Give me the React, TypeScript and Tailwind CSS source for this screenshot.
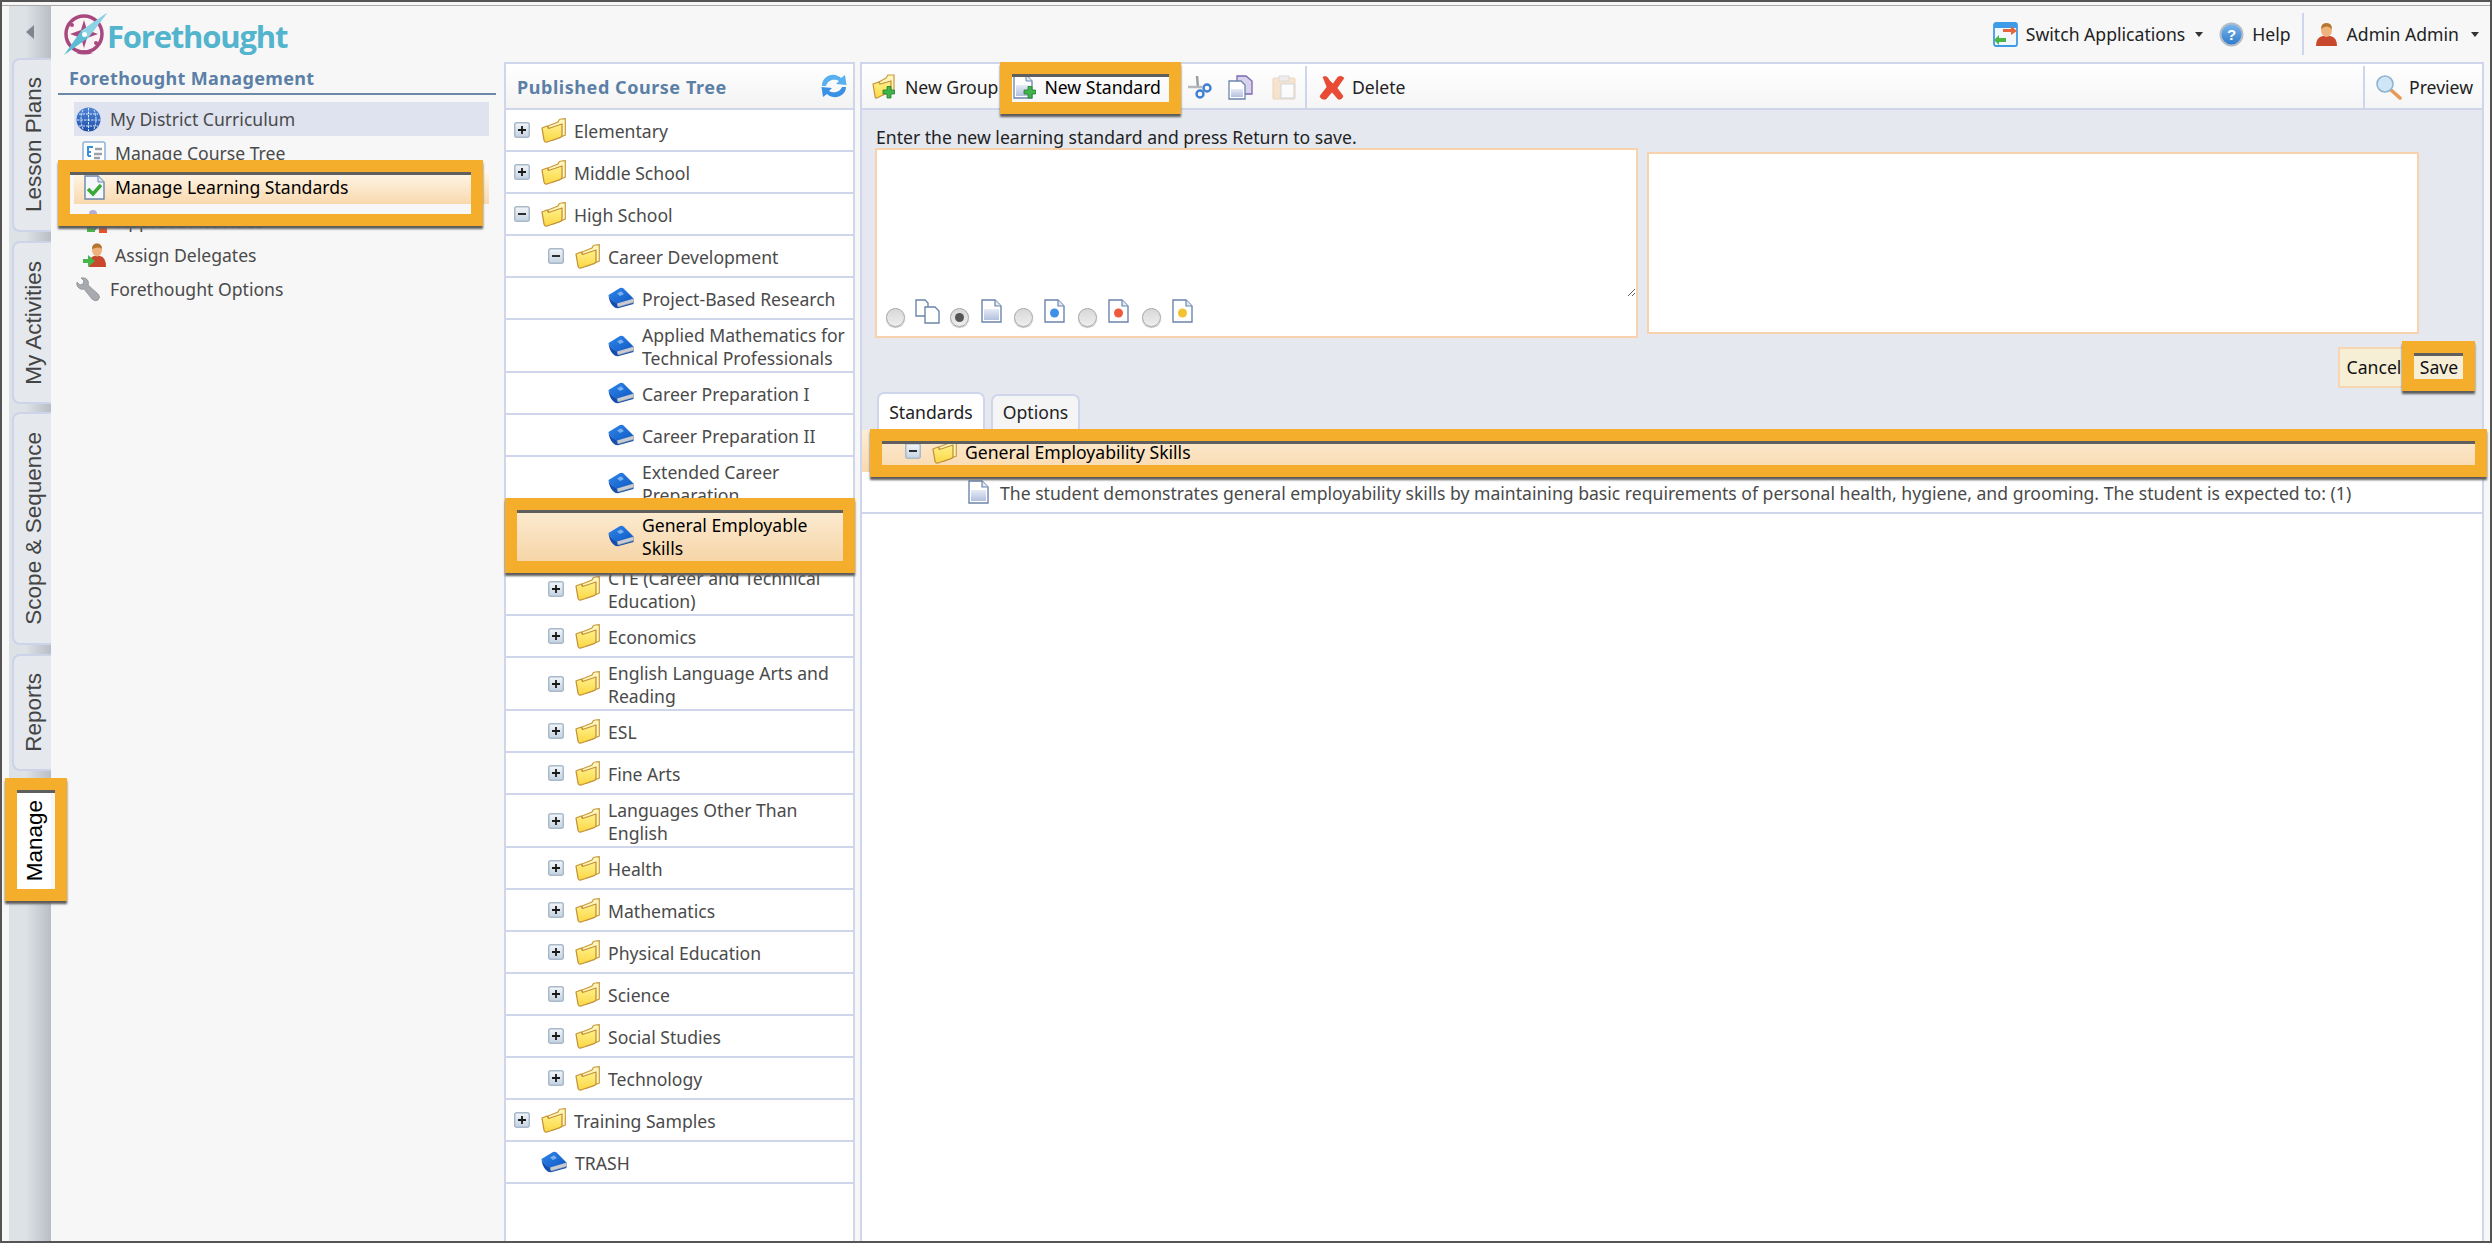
import type { ReactNode } from "react";

const Folder = () => (
  <svg width="25" height="25" viewBox="0 0 25 25" className="shrink-0">
    <path d="M7 8 L17 4 Q18 1 20 1 L24.3 0.7 V17 L12 22 Z" fill="#fff6bd" stroke="#c99b3e" strokeWidth="1.2" />
    <path d="M1 10 L6 8 L7.5 10.5 L21 6 V17 Q21 19 19 19.6 L6 24 Q3.5 24.6 3 22 Z" fill="url(#folderFill)" stroke="#c4923a" strokeWidth="1.3" strokeLinejoin="round" />
  </svg>
);

const Book = () => (
  <svg width="26" height="22" viewBox="0 0 26 22" className="shrink-0">
    <path d="M0.5 8 Q1 15 5 19 Q7 21.5 10 21.3 L25.5 17 V15 L10 19.5 L9 16 Q3 14 0.5 8 Z" fill="#144fb0" />
    <path d="M9 16 L25.5 11.5 V15.5 L10 20 Z" fill="#c8ccd2" stroke="#8793a0" strokeWidth="0.6" />
    <path d="M0.5 8 L12 1 Q14 0.3 15.5 1.5 L25.5 11.5 L9 16.5 Q3 14.5 0.5 8 Z" fill="url(#bookFill)" />
    <path d="M9 6.5 L13 4.3 L16 7 L12 9 Z" fill="#78b0f0" />
  </svg>
);

const ToggleBox = ({ open }: { open?: boolean }) => (
  <svg width="16" height="16" viewBox="0 0 16 16" className="shrink-0">
    <rect x="0.75" y="0.75" width="14.5" height="14.5" rx="2" fill="url(#boxFill)" stroke="#a9b9c9" strokeWidth="1.5" />
    <path d={open ? "M4 8 H12" : "M4 8 H12 M8 4 V12"} stroke="#1a1a1a" strokeWidth="1.8" />
  </svg>
);

const Page = ({ dot }: { dot?: string }) => (
  <svg width="21" height="24" viewBox="0 0 21 24" className="shrink-0">
    <path d="M1 1 H14 L20 7 V23 H1 Z" fill="#ffffff" stroke="#6b85ad" strokeWidth="1.4" />
    <path d="M14 1 V7 H20" fill="#e3e9f3" stroke="#6b85ad" strokeWidth="1.2" />
    {dot ? <circle cx="10.5" cy="14" r="4.5" fill={dot} /> : <rect x="3" y="10" width="15" height="11" fill="url(#pageFill)" />}
  </svg>
);

const DoublePage = () => (
  <svg width="25" height="25" viewBox="0 0 25 25" className="shrink-0">
    <path d="M1 1 H10 L13 4 V17 H1 Z" fill="#fff" stroke="#6b85ad" strokeWidth="1.4" />
    <path d="M10 8 H20 L24 12 V24 H10 Z" fill="#fff" stroke="#6b85ad" strokeWidth="1.4" />
  </svg>
);

const GreenPlus = () => (
  <path d="M11 16 H15 V12.5 H19 V16 H22.5 V20 H19 V24 H15 V20 H11 Z" fill="#3fb44a" stroke="#1f7d2b" strokeWidth="0.8" />
);

const NewFolderIcon = () => (
  <svg width="24" height="26" viewBox="0 0 24 26" className="shrink-0">
    <path d="M7 8 L14 4 L16 1 L22 1 V17 L10 21 Z" fill="#fff6bd" stroke="#c99b3e" strokeWidth="1.2" />
    <path d="M1 10 L7 8 L8 10 L19 7 V17 L5 24 Q3 24.5 3 22 Z" fill="url(#folderFill)" stroke="#c4923a" strokeWidth="1.2" />
    <GreenPlus />
  </svg>
);

const NewDocIcon = () => (
  <svg width="23" height="26" viewBox="0 0 23 26" className="shrink-0">
    <path d="M1 1 H13 L19 7 V24 H1 Z" fill="#fff" stroke="#6b85ad" strokeWidth="1.3" />
    <path d="M13 1 V7 H19" fill="#e3e9f3" stroke="#6b85ad" />
    <rect x="3" y="11" width="14" height="11" fill="url(#pageFill)" />
    <GreenPlus />
  </svg>
);

const Scissors = () => (
  <svg width="25" height="24" viewBox="0 0 25 24" className="shrink-0">
    <path d="M10 1 L11 13" stroke="#9aa0a6" strokeWidth="2.5" />
    <path d="M1 12 H15" stroke="#b5b9bd" strokeWidth="2.5" />
    <circle cx="13" cy="19" r="3.5" fill="none" stroke="#3f7fd0" strokeWidth="2.4" />
    <circle cx="20" cy="13" r="3.5" fill="none" stroke="#3f7fd0" strokeWidth="2.4" />
  </svg>
);

const CopyIcon = () => (
  <svg width="25" height="25" viewBox="0 0 25 25" className="shrink-0">
    <path d="M9 1 H18 L24 6 V19 H9 Z" fill="#d9d2ec" stroke="#7a68ad" strokeWidth="1.3" />
    <path d="M1 6 H13 L17 10 V24 H1 Z" fill="#fff" stroke="#6b85ad" strokeWidth="1.3" />
    <rect x="3" y="14" width="12" height="8" fill="url(#pageFill)" />
  </svg>
);

const PasteIcon = () => (
  <svg width="24" height="25" viewBox="0 0 24 25" className="shrink-0 opacity-40">
    <rect x="1" y="3" width="22" height="21" rx="1" fill="#f3c38c" stroke="#d9a064" />
    <rect x="7" y="1" width="10" height="5" fill="#d8d8d8" stroke="#aaa" />
    <rect x="9" y="9" width="13" height="14" fill="#fff" stroke="#8ea3c2" />
  </svg>
);

const DeleteIcon = () => (
  <svg width="26" height="25" viewBox="0 0 26 25" className="shrink-0">
    <path d="M4 2 Q8 0 10 5 L14 9 L19 2 Q22 0 25 3 L18 13 L24 21 Q23 25 19 24 L13 17 L7 24 Q2 25 1 21 L8 12 Z" fill="#ea4b34" stroke="#d93a26" strokeWidth="0.6" strokeLinejoin="round" />
  </svg>
);

const Magnifier = () => (
  <svg width="27" height="25" viewBox="0 0 27 25" className="shrink-0">
    <path d="M16 15 L25 23" stroke="#e69a5c" strokeWidth="3.6" strokeLinecap="round" />
    <circle cx="10" cy="9" r="8" fill="#cfe6f7" stroke="#8fb4d2" strokeWidth="1.6" />
  </svg>
);

const SwitchIcon = () => (
  <svg width="25" height="25" viewBox="0 0 25 25" className="shrink-0">
    <rect x="1" y="1" width="23" height="23" rx="2" fill="#f2f7fd" stroke="#3d9be8" strokeWidth="1.8" />
    <rect x="1" y="1" width="23" height="5" fill="#3d9be8" />
    <path d="M10 7 H18 V4 L24 9 L18 13 V10 H10 Z" fill="#e8643a" />
    <path d="M13 16 H6 V13 L1 18 L6 23 V20 H13 Z" fill="#4cb548" />
  </svg>
);

const HelpIcon = () => (
  <svg width="25" height="25" viewBox="0 0 25 25" className="shrink-0">
    <circle cx="12.5" cy="12.5" r="11" fill="url(#helpFill)" stroke="#b3bdc7" strokeWidth="2" />
    <text x="12.5" y="18" textAnchor="middle" fontSize="15" fontWeight="700" fill="#fff" fontFamily="'Liberation Sans', sans-serif">?</text>
  </svg>
);

const UserIcon = () => (
  <svg width="23" height="25" viewBox="0 0 23 25" className="shrink-0">
    <path d="M1 24 Q1 15 8 14 H15 Q22 15 22 24 Z" fill="#c9472c" />
    <ellipse cx="11.5" cy="8" rx="5.5" ry="7" fill="#efb27c" />
    <path d="M6 7 Q6 1 11.5 1 Q17 1 17 7 Q14 4 11 4.5 Q8 5 6 7 Z" fill="#b5772f" />
  </svg>
);

const RefreshIcon = () => (
  <svg width="26" height="26" viewBox="0 0 26 26">
    <path d="M1 13 C1 5 8 1 14 2 C16.5 2.5 18.5 3.5 20 5 L24 2 L25.5 12 L15 11 L18 8 C14 5.5 7 6.5 5 13 Z" fill="#58b0f0" />
    <path d="M25 14 C25 21 18 25 12 24 C9.5 23.5 7.5 22.5 6 21 L2 24 L0.5 14 L11 15 L8 18 C12 20.5 19 19.5 21 14 Z" fill="#3a90e4" />
  </svg>
);

const GlobeIcon = () => (
  <svg width="25" height="25" viewBox="0 0 25 25">
    <circle cx="12.5" cy="12.5" r="12" fill="url(#globeFill)" />
    <path d="M3 7 H22 M1 13 H24 M3 19 H22 M12.5 1 V24 M7 3 Q3 12 7 22 M18 3 Q22 12 18 22" stroke="#dbe8fa" strokeWidth="1" fill="none" strokeDasharray="2.5 1" />
  </svg>
);

const TreeIcon = () => (
  <svg width="24" height="24" viewBox="0 0 24 24">
    <rect x="1" y="1" width="22" height="22" rx="2" fill="#fff" stroke="#8fb1d8" strokeWidth="1.5" />
    <path d="M5 6 H11 M6 6 V15 M6 11 H9 M6 15 H9" stroke="#3a8fdc" strokeWidth="2" fill="none" />
    <path d="M13 8 H20 M12 13 H20 M12 17 H18" stroke="#9aa0a8" strokeWidth="2.4" />
  </svg>
);

const CheckDocIcon = () => (
  <svg width="21" height="25" viewBox="0 0 21 25">
    <path d="M1 1 H14 L20 7 V24 H1 Z" fill="#f4f7fb" stroke="#6b85ad" strokeWidth="1.4" />
    <path d="M14 1 V7 H20" fill="#dde5f0" stroke="#6b85ad" />
    <path d="M4 14 L9 19 L17 10" fill="none" stroke="#3aa935" strokeWidth="3.4" />
  </svg>
);

const ApproveIcon = () => (
  <svg width="24" height="26" viewBox="0 0 24 26">
    <circle cx="9" cy="6" r="4" fill="#b5acd8" />
    <circle cx="8" cy="17" r="6" fill="#7c74b0" />
    <rect x="15" y="16" width="8" height="9" fill="#e4552f" />
    <rect x="3" y="20" width="8" height="4" fill="#4cb548" />
  </svg>
);

const DelegateIcon = () => (
  <svg width="25" height="25" viewBox="0 0 25 25">
    <path d="M7 24 Q7 14 12 13 H18 Q24 14 24 24 Z" fill="#c9472c" />
    <ellipse cx="15" cy="7" rx="5" ry="6.5" fill="#efb27c" />
    <path d="M10 6 Q10 0.5 15 0.5 Q20 0.5 20 6 Q17 3 10 6 Z" fill="#b5772f" />
    <path d="M1 16 H6 V12 L13 18 L6 24 V20 H1 Z" fill="#46b54a" />
  </svg>
);

const WrenchIcon = () => (
  <svg width="25" height="25" viewBox="0 0 25 25">
    <path d="M1 5 L4 8 L7 7 L8 4 L5 1 Q10 0 12 4 Q13 6 12 8 L22 17 Q25 20 22 23 Q19 25 16 22 L8 12 Q5 13 3 11 Q0 9 1 5 Z" fill="#a7abaf" stroke="#8b8f93" strokeWidth="0.8" />
  </svg>
);

const Compass = () => (
  <svg width="46" height="44" viewBox="0 0 46 44" className="shrink-0">
    <circle cx="22" cy="22" r="18" fill="#fbf4f7" stroke="#a8487f" strokeWidth="3.5" />
    <path d="M22 8 L25 18 L36 22 L25 26 L22 36 L19 26 L8 22 L19 18 Z" fill="#a8487f" />
    <circle cx="10" cy="13" r="2" fill="#a8487f" />
    <circle cx="34" cy="31" r="2" fill="#a8487f" />
    <path d="M45 1 L26 26 L2 43 L19 19 Z" fill="#5bbcd4" />
    <path d="M45 1 L19 19 L26 26 Z" fill="#8ed3e4" />
    <circle cx="22.5" cy="22.5" r="2.5" fill="#fff" />
    <path d="M14 41 Q22 44 31 41 L22 38 Z" fill="#a8487f" />
  </svg>
);

// the orange callout frames laid over the screenshot
const Callout = ({ className }: { className: string }) => (
  <div className={`absolute z-10 pointer-events-none border-[12px] border-[#f5ae2c] shadow-[0_3px_2px_#5c5c5c,inset_0_3px_0_#5f5f5f] ${className}`} />
);

type TreeRow = {
  label: string;
  level: 0 | 1 | 2;
  kind: "open" | "closed" | "leaf";
  tall?: boolean;
  active?: boolean;
};

const treeRows: TreeRow[] = [
  { label: "Elementary", level: 0, kind: "closed" },
  { label: "Middle School", level: 0, kind: "closed" },
  { label: "High School", level: 0, kind: "open" },
  { label: "Career Development", level: 1, kind: "open" },
  { label: "Project-Based Research", level: 2, kind: "leaf" },
  { label: "Applied Mathematics for\nTechnical Professionals", level: 2, kind: "leaf", tall: true },
  { label: "Career Preparation I", level: 2, kind: "leaf" },
  { label: "Career Preparation II", level: 2, kind: "leaf" },
  { label: "Extended Career\nPreparation", level: 2, kind: "leaf", tall: true },
  { label: "General Employable\nSkills", level: 2, kind: "leaf", tall: true, active: true },
  { label: "CTE (Career and Technical\nEducation)", level: 1, kind: "closed", tall: true },
  { label: "Economics", level: 1, kind: "closed" },
  { label: "English Language Arts and\nReading", level: 1, kind: "closed", tall: true },
  { label: "ESL", level: 1, kind: "closed" },
  { label: "Fine Arts", level: 1, kind: "closed" },
  { label: "Languages Other Than\nEnglish", level: 1, kind: "closed", tall: true },
  { label: "Health", level: 1, kind: "closed" },
  { label: "Mathematics", level: 1, kind: "closed" },
  { label: "Physical Education", level: 1, kind: "closed" },
  { label: "Science", level: 1, kind: "closed" },
  { label: "Social Studies", level: 1, kind: "closed" },
  { label: "Technology", level: 1, kind: "closed" },
  { label: "Training Samples", level: 0, kind: "closed" },
  { label: "TRASH", level: 0, kind: "leaf" },
];

function TreeItem({ row }: { row: TreeRow }) {
  let indent = "pl-[8px]";
  if (row.level === 1) indent = "pl-[42px]";
  if (row.level === 2) indent = "pl-[102px]";
  if (row.level === 0 && row.kind === "leaf") indent = "pl-[35px]";

  return (
    <div
      className={`relative flex items-center border-b-2 border-[#cfd5ea] ${indent} ${row.tall ? "h-[53px]" : "h-[42px]"} ${
        row.active ? "bg-gradient-to-b from-[#fcecd2] to-[#f6d5a8] text-black" : "text-[#4a4a4a]"
      }`}
    >
      {row.kind !== "leaf" && (
        <>
          <ToggleBox open={row.kind === "open"} />
          <span className="w-[11px] shrink-0" />
          <Folder />
        </>
      )}
      {row.kind === "leaf" && <Book />}
      <span className="ml-[8px] mt-[2px] leading-[23px] whitespace-pre-line">{row.label}</span>
      {row.active && <Callout className="-left-[1px] -right-[2px] -top-[12px] -bottom-[12px]" />}
    </div>
  );
}

const NavRow = ({ icon, label, className }: { icon: ReactNode; label: string; className?: string }) => (
  <div className={`relative flex items-center h-[34px] ${className ?? ""}`}>
    {icon}
    <span className="mt-[1px]">{label}</span>
  </div>
);

const Tab = ({ label, className }: { label: string; className: string }) => (
  <div className={`ml-[3px] flex items-center justify-center rounded-l-[8px] border-2 border-r-0 border-[#cdd3e8] bg-[#e5e9ee] pl-[3px] ${className}`}>
    <span className="[writing-mode:vertical-rl] rotate-180 font-['Liberation_Sans',sans-serif] text-[22.5px] text-[#444]">{label}</span>
  </div>
);

const Radio = ({ on }: { on?: boolean }) => (
  <span className="mt-[9px] flex h-[19px] w-[19px] shrink-0 items-center justify-center rounded-full border border-[#a8a8a8] bg-gradient-to-b from-[#d8d8d8] to-[#eeeeee] shadow-[0_1px_1px_#bbb]">
    {on && <span className="h-[9px] w-[9px] rounded-full bg-[#555]" />}
  </span>
);

const Caret = ({ className }: { className: string }) => (
  <span className={`h-0 w-0 border-x-[4px] border-t-[5px] border-x-transparent border-t-[#333] ${className}`} />
);

export default function App() {
  return (
    <div className="flex h-[1243px] w-[2492px] flex-col overflow-hidden border-2 border-[#555] bg-[#f7f7f7] font-['Noto_Sans',sans-serif] text-[17.6px]">
      <svg className="absolute h-0 w-0">
        <defs>
          <linearGradient id="folderFill" x1="0" y1="0" x2="0" y2="1">
            <stop offset="0" stopColor="#fff08a" />
            <stop offset="1" stopColor="#fbd844" />
          </linearGradient>
          <linearGradient id="bookFill" x1="0" y1="0" x2="1" y2="1">
            <stop offset="0" stopColor="#2f86ea" />
            <stop offset="1" stopColor="#1058c4" />
          </linearGradient>
          <linearGradient id="boxFill" x1="0" y1="0" x2="0" y2="1">
            <stop offset="0" stopColor="#f2f6fa" />
            <stop offset="1" stopColor="#c4d2e0" />
          </linearGradient>
          <linearGradient id="pageFill" x1="0" y1="0" x2="0" y2="1">
            <stop offset="0" stopColor="#e6ebf5" />
            <stop offset="1" stopColor="#b3c0de" />
          </linearGradient>
          <linearGradient id="helpFill" x1="0" y1="0" x2="0" y2="1">
            <stop offset="0" stopColor="#7db8ee" />
            <stop offset="1" stopColor="#2c78c8" />
          </linearGradient>
          <linearGradient id="globeFill" x1="0" y1="0" x2="0" y2="1">
            <stop offset="0" stopColor="#4f86d8" />
            <stop offset="1" stopColor="#1f4fa8" />
          </linearGradient>
        </defs>
      </svg>

      <div className="h-[3px] shrink-0 border-b border-[#aaa] box-content" />

      <div className="flex min-h-0 flex-1 pl-[7px] pr-[6px]">
        {/* side tabs */}
        <div className="flex w-[42px] shrink-0 flex-col bg-gradient-to-r from-[#dde2e6] from-40% to-[#b9bdc6]">
          <div className="flex h-[52px] shrink-0 items-center justify-center">
            <span className="h-0 w-0 border-y-[7px] border-r-[8px] border-y-transparent border-r-[#7d8790]" />
          </div>
          <Tab label="Lesson Plans" className="h-[174px]" />
          <Tab label="My Activities" className="mt-[9px] h-[163px]" />
          <Tab label="Scope & Sequence" className="mt-[8px] h-[233px]" />
          <Tab label="Reports" className="mt-[9px] h-[117px]" />
          <div className="relative ml-[3px] mt-[10px] flex h-[119px] items-center justify-center bg-white pl-[6px]">
            <span className="[writing-mode:vertical-rl] rotate-180 font-['Liberation_Sans',sans-serif] text-[22.5px] text-black">Manage</span>
            <Callout className="-left-[7px] top-[-3px] h-[123px] w-[62px]" />
          </div>
        </div>

        <div className="flex min-w-0 flex-1 flex-col">
          {/* top bar */}
          <div className="flex h-[56px] shrink-0 items-center justify-between pl-[11px] pr-[5px] text-[#222]">
            <div className="flex items-center">
              <Compass />
              <span className="ml-[-1px] mt-[4px] font-['Open_Sans',sans-serif] text-[31px] font-bold leading-none tracking-[-1.2px] text-[#52b4cd]">Forethought</span>
            </div>
            <div className="flex items-center">
              <SwitchIcon />
              <span className="ml-[8px]">Switch Applications</span>
              <Caret className="ml-[10px]" />
              <span className="ml-[16px] flex"><HelpIcon /></span>
              <span className="ml-[8px]">Help</span>
              <span className="ml-[11px] h-[42px] w-[2px] bg-[#cfd5ea]" />
              <span className="ml-[11px] flex"><UserIcon /></span>
              <span className="ml-[9px]">Admin Admin</span>
              <Caret className="ml-[12px]" />
            </div>
          </div>

          <div className="flex min-h-0 flex-1">
            {/* management nav */}
            <div className="w-[453px] shrink-0 pl-[7px] pr-[8px] text-[#4a4a4a]">
              <div className="flex h-[33px] items-end border-b-2 border-[#6c8aa8] pb-[1px] pl-[11px] text-[18px] font-bold tracking-[0.35px] text-[#5b7fa6]">Forethought Management</div>
              <div className="ml-[16px] mr-[7px] mt-[7px]">
                <NavRow className="bg-[#dfe3ef] pl-[2px] gap-[9px]" icon={<GlobeIcon />} label="My District Curriculum" />
                <NavRow className="pl-[8px] gap-[9px]" icon={<TreeIcon />} label="Manage Course Tree" />
                <NavRow
                  className="bg-gradient-to-b from-[#fff8ec] to-[#f9d9ae] pl-[10px] gap-[10px] text-black"
                  icon={<CheckDocIcon />}
                  label="Manage Learning Standards"
                />
                <div className="relative h-0">
                  <Callout className="left-[-16px] top-[-44px] h-[66px] w-[425px]" />
                </div>
                <NavRow className="pl-[10px] gap-[9px]" icon={<ApproveIcon />} label="Approve Activities" />
                <NavRow className="pl-[8px] gap-[8px]" icon={<DelegateIcon />} label="Assign Delegates" />
                <NavRow className="pl-[2px] gap-[9px]" icon={<WrenchIcon />} label="Forethought Options" />
              </div>
            </div>

            {/* course tree */}
            <div className="w-[351px] shrink-0 border-x-2 border-t-2 border-[#cfd5ea] bg-white">
              <div className="flex h-[46px] items-center justify-between border-b-2 border-[#cfd5ea] bg-gradient-to-b from-white to-[#f3f3f3] pl-[11px] pr-[6px]">
                <span className="mt-[2px] text-[18px] font-bold tracking-[0.55px] text-[#5b7fa6]">Published Course Tree</span>
                <RefreshIcon />
              </div>
              {treeRows.map((row) => (
                <TreeItem key={row.label} row={row} />
              ))}
            </div>

            {/* standards editor */}
            <div className="ml-[5px] flex min-w-0 flex-1 flex-col border-x-2 border-t-2 border-[#cfd5ea] bg-white">
              <div className="flex h-[46px] shrink-0 items-center border-b-2 border-[#cfd5ea] bg-gradient-to-b from-white to-[#f5f5f5] pl-[10px] pt-[2px] text-[#222]">
                <NewFolderIcon />
                <span className="ml-[9px]">New Group</span>
                <div className="relative ml-[15px] flex items-center pr-[10px]">
                  <NewDocIcon />
                  <span className="ml-[8px] text-black">New Standard</span>
                  <Callout className="left-[-13px] top-[-12px] h-[52px] w-[181px]" />
                </div>
                <span className="ml-[16px] flex"><Scissors /></span>
                <span className="ml-[16px] flex"><CopyIcon /></span>
                <span className="ml-[19px] flex"><PasteIcon /></span>
                <span className="ml-[9px] h-[42px] w-[2px] bg-[#cfd5ea]" />
                <span className="ml-[12px] flex"><DeleteIcon /></span>
                <span className="ml-[7px]">Delete</span>
                <div className="ml-auto flex h-full w-[119px] items-center border-l-2 border-[#cfd5ea] pl-[10px]">
                  <Magnifier />
                  <span className="ml-[7px]">Preview</span>
                </div>
              </div>

              <div className="h-[320px] shrink-0 bg-[#e5e9ef] px-[13px] pt-[16px]">
                <div className="ml-[1px] leading-[22px] text-[#222]">Enter the new learning standard and press Return to save.</div>
                <div className="flex items-center">
                  <div className="h-[190px] w-[763px] border-2 border-[#f7d2ad] bg-white">
                    <textarea className="block h-[147px] w-full bg-white outline-none" />
                    <div className="flex items-start pl-[9px] pt-[2px]">
                      <Radio />
                      <span className="ml-[10px] flex"><DoublePage /></span>
                      <span className="ml-[10px] flex"><Radio on /></span>
                      <span className="ml-[12px] flex"><Page /></span>
                      <span className="ml-[12px] flex"><Radio /></span>
                      <span className="ml-[11px] flex"><Page dot="#3d8fe8" /></span>
                      <span className="ml-[13px] flex"><Radio /></span>
                      <span className="ml-[11px] flex"><Page dot="#ef5a3c" /></span>
                      <span className="ml-[13px] flex"><Radio /></span>
                      <span className="ml-[11px] flex"><Page dot="#f2c230" /></span>
                    </div>
                  </div>
                  <div className="ml-[9px] h-[182px] w-[772px] border-2 border-[#f7d2ad] bg-white" />
                </div>
                <div className="mt-[9px] flex justify-end pr-[1px]">
                  <div className="flex h-[41px] w-[72px] items-center justify-center border-2 border-[#f7d6b2] bg-[#f7eed6] text-[#111]">Cancel</div>
                  <div className="relative flex h-[41px] w-[58px] items-center justify-center bg-[#f7eed6] text-[#111]">
                    Save
                    <Callout className="left-[-8px] top-[-6px] h-[50px] w-[73px]" />
                  </div>
                </div>
                <div className="mt-[4px] ml-[2px] flex items-end gap-[6px]">
                  <div className="flex h-[37px] w-[108px] items-center justify-center rounded-t-[7px] border-2 border-b-0 border-[#cfd5ea] bg-white pt-[2px] text-[#222]">Standards</div>
                  <div className="flex h-[35px] w-[89px] items-center justify-center rounded-t-[7px] border-2 border-b-0 border-[#cfd5ea] bg-[#f5f5f5] text-[#222]">Options</div>
                </div>
              </div>

              <div className="relative flex h-[42px] shrink-0 items-center bg-gradient-to-b from-[#fdeed5] to-[#f9d9ae] pl-[43px] text-black">
                <ToggleBox open />
                <span className="ml-[11px] flex"><Folder /></span>
                <span className="ml-[8px] mt-[2px]">General Employability Skills</span>
                <Callout className="left-[8px] -right-[5px] top-[-1px] h-[48px]" />
              </div>
              <div className="flex h-[42px] shrink-0 items-center border-b-2 border-[#cfd5ea] pl-[106px] text-[#4a4a4a]">
                <Page />
                <span className="ml-[11px] mt-[2px]">The student demonstrates general employability skills by maintaining basic requirements of personal health, hygiene, and grooming. The student is expected to: (1)</span>
              </div>
            </div>
          </div>
        </div>
      </div>
    </div>
  );
}
